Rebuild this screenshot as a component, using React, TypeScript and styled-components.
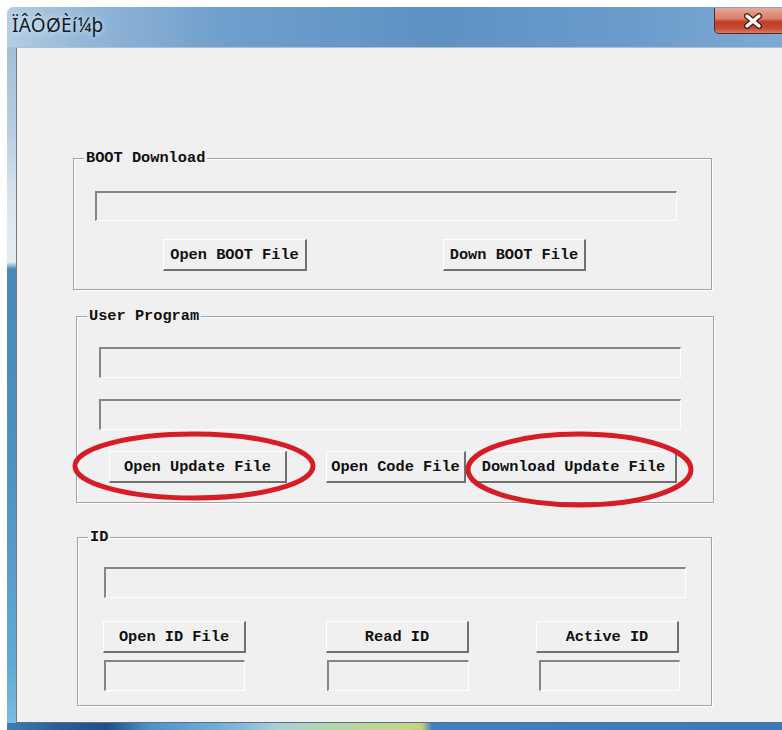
import styled, { createGlobalStyle } from 'styled-components';

const GlobalStyle = createGlobalStyle`
  html, body {
    margin: 0;
    padding: 0;
    background: #ffffff;
  }
  body {
    width: 782px;
    height: 730px;
    overflow: hidden;
  }
`;

const Window = styled.div`
  margin: 7px 0 0 7px;
  width: 775px;
  height: 723px;
  display: flex;
  flex-direction: column;
  overflow: hidden;
  border-top-left-radius: 7px;
  background: linear-gradient(
    180deg,
    #9ab8d6 0px,
    #b6cde3 120px,
    #dbe7f0 200px,
    #e4edf3 255px,
    #4a89b8 262px,
    #4e90bf 450px,
    #62aad4 660px,
    #7cc0e0 723px
  );
`;

const TitleBar = styled.div`
  flex: none;
  height: 41px;
  box-sizing: border-box;
  display: flex;
  align-items: flex-start;
  background: linear-gradient(
    90deg,
    #b4cde4 0%,
    #93b7d8 10%,
    #6f9fcc 28%,
    #5e91c3 55%,
    #6a9bcb 80%,
    #7eaad2 100%
  );
  border-bottom: 1px solid #a9c0d6;
`;

const Title = styled.span`
  padding: 6px 0 0 5px;
  font-family: "Noto Sans", "DejaVu Sans", sans-serif;
  font-size: 19px;
  line-height: 24px;
  letter-spacing: 0.3px;
  color: #121a26;
  text-shadow: 0 0 6px rgba(255, 255, 255, 0.85);
`;

const CloseButton = styled.div`
  margin: 1px -9px 0 auto;
  width: 77px;
  height: 26px;
  box-sizing: border-box;
  display: flex;
  align-items: center;
  justify-content: center;
  border: 1px solid #5a2824;
  border-top: none;
  border-radius: 0 0 5px 5px;
  background: linear-gradient(
    180deg,
    #e8a596 0%,
    #d9806c 42%,
    #c23d27 55%,
    #c44a33 80%,
    #de7a5e 100%
  );
`;

const Client = styled.div`
  flex: 1;
  margin-left: 9px;
  display: flex;
  flex-direction: column;
  align-items: flex-start;
  background: #f0f0f0;
  border-left: 1px solid #6a7d90;
  border-bottom: 1px solid #5d6f82;
`;

const BottomEdge = styled.div`
  flex: none;
  height: 7px;
  background: linear-gradient(
    90deg,
    #3e7cb6 0px,
    #2a5f9a 50px,
    #1f4f88 100px,
    #4a90c8 140px,
    #7fb6dc 230px,
    #a9d0d6 270px,
    #b5d6a8 330px,
    #c6d585 400px,
    #c3cf7c 415px,
    #3f82c2 425px,
    #3779bb 782px
  );
`;

const GroupBox = styled.div<{ $top: number; $left: number; $width: number; $height: number }>`
  box-sizing: border-box;
  margin-top: ${({ $top }) => $top}px;
  margin-left: ${({ $left }) => $left}px;
  width: ${({ $width }) => $width}px;
  height: ${({ $height }) => $height}px;
  display: flex;
  flex-direction: column;
  align-items: flex-start;
  border: 1px solid #a3a3a3;
  box-shadow: 1px 1px 0 #ffffff, inset 1px 1px 0 #ffffff;
`;

const Legend = styled.span`
  margin: -9px 0 0 10px;
  padding: 0 2px;
  height: 16px;
  line-height: 16px;
  background: #f0f0f0;
  font-family: "Liberation Mono", "DejaVu Sans Mono", monospace;
  font-size: 15.3px;
  font-weight: bold;
  color: #111111;
`;

const Field = styled.div<{ $top: number; $left: number; $width: number; $height?: number }>`
  box-sizing: border-box;
  flex: none;
  margin-top: ${({ $top }) => $top}px;
  margin-left: ${({ $left }) => $left}px;
  width: ${({ $width }) => $width}px;
  height: ${({ $height = 31 }) => $height}px;
  background: #f0f0f0;
  border-style: solid;
  border-width: 2px 1px 1px 2px;
  border-color: #858585 #ffffff #ffffff #858585;
`;

const ButtonRow = styled.div<{ $top: number }>`
  position: relative;
  margin-top: ${({ $top }) => $top}px;
  display: flex;
  align-items: flex-start;
`;

const Button = styled.button<{ $left: number; $width: number }>`
  box-sizing: border-box;
  flex: none;
  margin-left: ${({ $left }) => $left}px;
  width: ${({ $width }) => $width}px;
  height: 32px;
  padding: 0;
  background: #f0f0f0;
  border-style: solid;
  border-width: 1px 2px 2px 1px;
  border-color: #ffffff #707070 #707070 #ffffff;
  font-family: "Liberation Mono", "DejaVu Sans Mono", monospace;
  font-size: 15.3px;
  font-weight: bold;
  color: #111111;
  white-space: nowrap;
  cursor: default;
`;

const IdColumn = styled.div<{ $left: number }>`
  margin-left: ${({ $left }) => $left}px;
  display: flex;
  flex-direction: column;
  gap: 7px;
`;

const Mark = styled.svg<{ $x: number; $y: number }>`
  position: absolute;
  left: ${({ $x }) => $x}px;
  top: ${({ $y }) => $y}px;
  overflow: visible;
  pointer-events: none;
`;

function RedRing({ x, y, w, h }: { x: number; y: number; w: number; h: number }) {
  return (
    <Mark $x={x} $y={y} width={w} height={h} viewBox={`0 0 ${w} ${h}`}>
      <ellipse
        cx={w / 2}
        cy={h / 2}
        rx={w / 2 - 3}
        ry={h / 2 - 3}
        fill="none"
        stroke="#d61c25"
        strokeWidth={5}
      />
    </Mark>
  );
}

function CloseGlyph() {
  return (
    <svg width="22" height="16" viewBox="0 0 22 16">
      <path d="M5 3 L17 13 M17 3 L5 13" stroke="#4b1d1a" strokeWidth="6" strokeLinecap="round" />
      <path d="M5 3 L17 13 M17 3 L5 13" stroke="#ffffff" strokeWidth="3.4" strokeLinecap="round" />
    </svg>
  );
}

export default function App() {
  return (
    <>
      <GlobalStyle />
      <Window>
        <TitleBar>
          <Title>ÏÂÔØÈí¼þ</Title>
          <CloseButton>
            <CloseGlyph />
          </CloseButton>
        </TitleBar>

        <Client>
          <GroupBox $top={110} $left={56} $width={639} $height={132}>
            <Legend>BOOT Download</Legend>
            <Field $top={25} $left={21} $width={582} $height={30} />
            <ButtonRow $top={18}>
              <Button $left={89} $width={144}>Open BOOT File</Button>
              <Button $left={136} $width={143}>Down BOOT File</Button>
            </ButtonRow>
          </GroupBox>

          <GroupBox $top={26} $left={59} $width={638} $height={187}>
            <Legend>User Program</Legend>
            <Field $top={23} $left={22} $width={582} />
            <Field $top={21} $left={22} $width={582} />
            <ButtonRow $top={21}>
              <Button $left={32} $width={178}>Open Update File</Button>
              <Button $left={39} $width={140}>Open Code File</Button>
              <Button $left={5} $width={206}>Download Update File</Button>
              <RedRing x={-5} y={-20} w={244} h={70} />
              <RedRing x={388} y={-20} w={229} h={77} />
            </ButtonRow>
          </GroupBox>

          <GroupBox $top={34} $left={60} $width={635} $height={169}>
            <Legend>ID</Legend>
            <Field $top={22} $left={26} $width={582} />
            <ButtonRow $top={23}>
              <IdColumn $left={25}>
                <Button $left={0} $width={143}>Open ID File</Button>
                <Field $top={0} $left={1} $width={141} />
              </IdColumn>
              <IdColumn $left={80}>
                <Button $left={0} $width={143}>Read ID</Button>
                <Field $top={0} $left={1} $width={142} />
              </IdColumn>
              <IdColumn $left={67}>
                <Button $left={0} $width={143}>Active ID</Button>
                <Field $top={0} $left={3} $width={141} />
              </IdColumn>
            </ButtonRow>
          </GroupBox>
        </Client>

        <BottomEdge />
      </Window>
    </>
  );
}
